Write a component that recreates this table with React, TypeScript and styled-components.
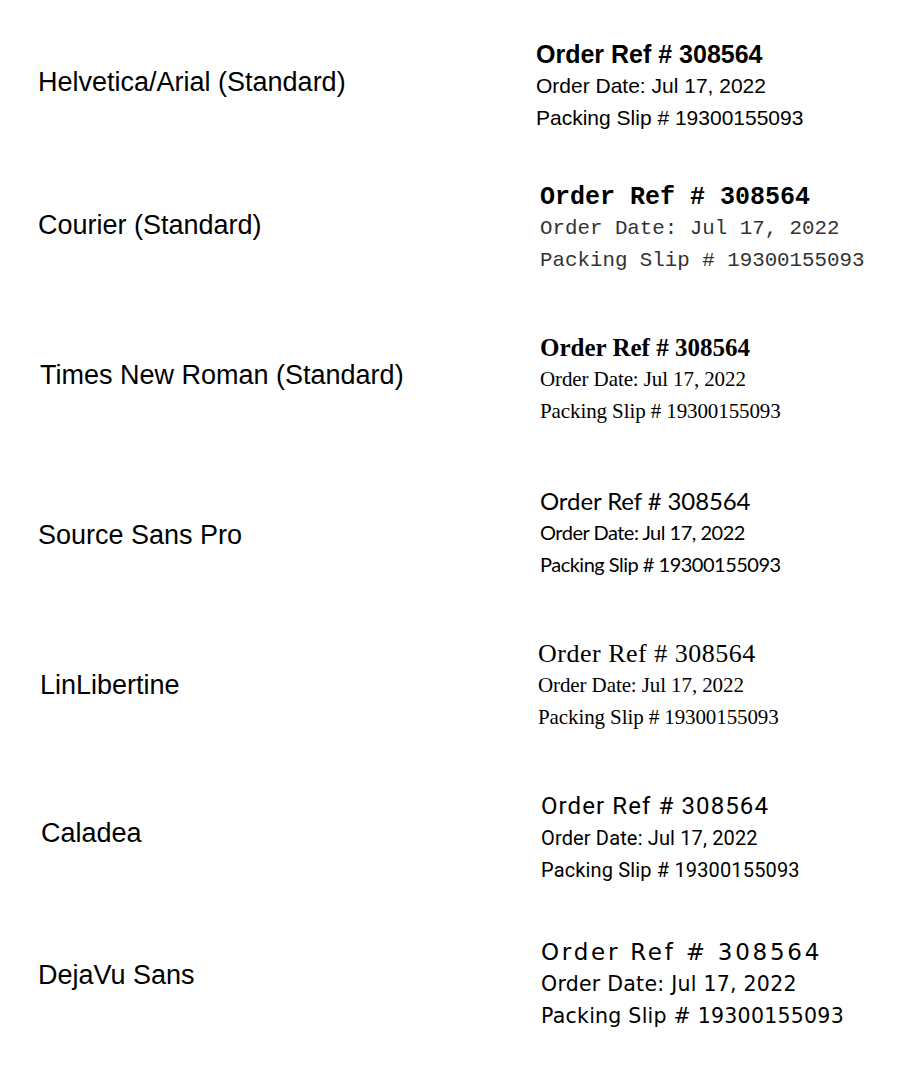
import styled, { createGlobalStyle } from "styled-components";

const GlobalStyle = createGlobalStyle`
  html, body {
    margin: 0;
    padding: 0;
    background: #ffffff;
  }
  body {
    font-family: "Liberation Sans", Arial, sans-serif;
    color: #000000;
  }
`;

type Sample = {
  label: string;
  family: string;
  rowHeight: number;
  labelTop: number;
  labelLeft: number;
  blockLeft: number;
  headSize: number;
  headWeight: number;
  headSpacing: number;
  lineSize: number;
  lineSpacing: number;
  tone: string;
};

const samples: Sample[] = [
  {
    label: "Helvetica/Arial (Standard)",
    family: `"Liberation Sans", Arial, sans-serif`,
    rowHeight: 143,
    labelTop: 28,
    labelLeft: 38,
    blockLeft: 536,
    headSize: 25,
    headWeight: 700,
    headSpacing: 0,
    lineSize: 21,
    lineSpacing: 0,
    tone: "#000",
  },
  {
    label: "Courier (Standard)",
    family: `"Liberation Mono", "Courier New", monospace`,
    rowHeight: 150,
    labelTop: 28,
    labelLeft: 38,
    blockLeft: 540,
    headSize: 25,
    headWeight: 700,
    headSpacing: 0,
    lineSize: 20.8,
    lineSpacing: 0,
    tone: "#333",
  },
  {
    label: "Times New Roman (Standard)",
    family: `"Liberation Serif", "Times New Roman", serif`,
    rowHeight: 153,
    labelTop: 28,
    labelLeft: 40,
    blockLeft: 540,
    headSize: 25,
    headWeight: 700,
    headSpacing: 0,
    lineSize: 21,
    lineSpacing: -0.1,
    tone: "#000",
  },
  {
    label: "Source Sans Pro",
    family: `Lato, "Open Sans", sans-serif`,
    rowHeight: 153,
    labelTop: 35,
    labelLeft: 38,
    blockLeft: 540,
    headSize: 24,
    headWeight: 400,
    headSpacing: -0.1,
    lineSize: 20,
    lineSpacing: -0.5,
    tone: "#000",
  },
  {
    label: "LinLibertine",
    family: `"Liberation Serif", "Times New Roman", serif`,
    rowHeight: 153,
    labelTop: 32,
    labelLeft: 40,
    blockLeft: 538,
    headSize: 26,
    headWeight: 400,
    headSpacing: 0.5,
    lineSize: 21,
    lineSpacing: -0.1,
    tone: "#000",
  },
  {
    label: "Caladea",
    family: `Roboto, "Noto Sans", sans-serif`,
    rowHeight: 146,
    labelTop: 27,
    labelLeft: 41,
    blockLeft: 541,
    headSize: 24,
    headWeight: 400,
    headSpacing: 1.1,
    lineSize: 20,
    lineSpacing: 0.15,
    tone: "#000",
  },
  {
    label: "DejaVu Sans",
    family: `"DejaVu Sans", Verdana, sans-serif`,
    rowHeight: 138,
    labelTop: 23,
    labelLeft: 38,
    blockLeft: 541,
    headSize: 23,
    headWeight: 400,
    headSpacing: 2.75,
    lineSize: 20.5,
    lineSpacing: 0.25,
    tone: "#000",
  },
];

export default function App() {
  return (
    <>
      <GlobalStyle />
      <Page>
        {samples.map((s) => (
          <Row key={s.label} $height={s.rowHeight}>
            <Label $top={s.labelTop} $left={s.labelLeft}>
              {s.label}
            </Label>
            <Block $left={s.blockLeft} $family={s.family} $tone={s.tone}>
              <Heading $size={s.headSize} $weight={s.headWeight} $spacing={s.headSpacing}>
                Order Ref # 308564
              </Heading>
              <Line $size={s.lineSize} $spacing={s.lineSpacing}>
                Order Date: Jul 17, 2022
              </Line>
              <Line $size={s.lineSize} $spacing={s.lineSpacing}>
                Packing Slip # 19300155093
              </Line>
            </Block>
          </Row>
        ))}
      </Page>
    </>
  );
}

const Page = styled.div`
  width: 921px;
  min-height: 1075px;
  padding-top: 39px;
  box-sizing: border-box;
  background: #ffffff;
  display: flex;
  flex-direction: column;
`;

const Row = styled.div<{ $height: number }>`
  height: ${(p) => p.$height}px;
  display: grid;
  grid-template-columns: 500px 1fr;
  align-items: start;
`;

const Label = styled.div<{ $top: number; $left: number }>`
  margin-top: ${(p) => p.$top}px;
  padding-left: ${(p) => p.$left}px;
  font-family: "Liberation Sans", Arial, sans-serif;
  font-size: 27px;
  line-height: 30px;
  color: #000;
  white-space: nowrap;
`;

const Block = styled.div<{ $left: number; $family: string; $tone: string }>`
  margin-left: ${(p) => p.$left - 500}px;
  font-family: ${(p) => p.$family};
  color: ${(p) => p.$tone};
  display: flex;
  flex-direction: column;
  white-space: pre;
`;

const Heading = styled.div<{ $size: number; $weight: number; $spacing: number }>`
  font-size: ${(p) => p.$size}px;
  font-weight: ${(p) => p.$weight};
  letter-spacing: ${(p) => p.$spacing}px;
  line-height: 31px;
  color: #000;
`;

const Line = styled.div<{ $size: number; $spacing: number }>`
  font-size: ${(p) => p.$size}px;
  letter-spacing: ${(p) => p.$spacing}px;
  line-height: 32px;
`;
